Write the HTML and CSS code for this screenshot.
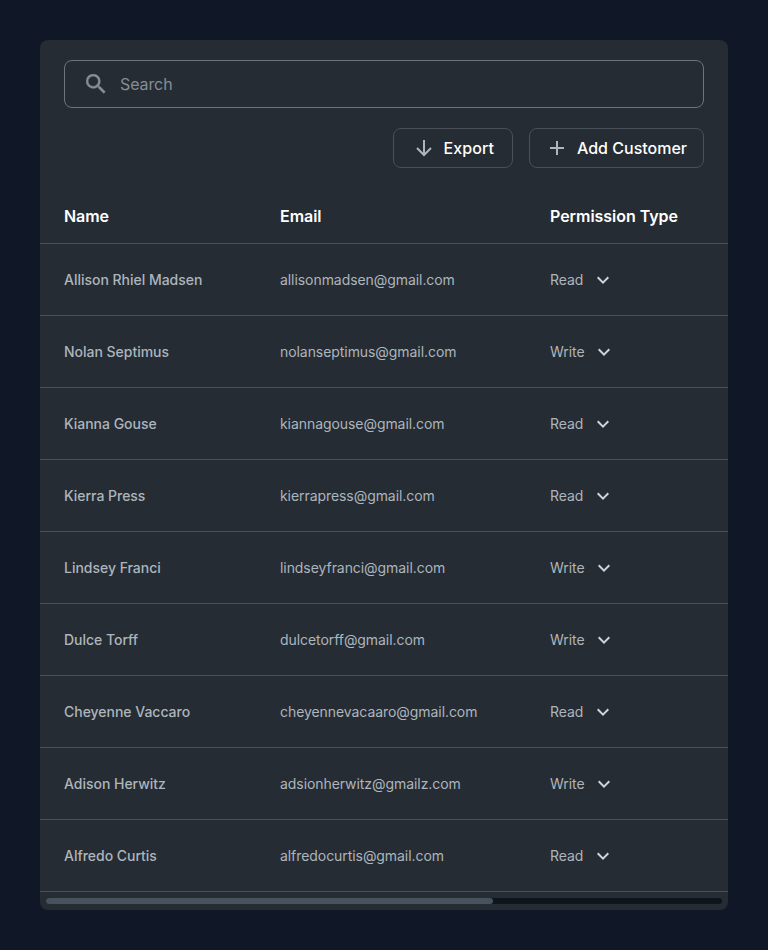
FILE: index.html
```html
<!DOCTYPE html>
<html lang="en">
<head>
<meta charset="utf-8">
<title>Customers</title>
<link rel="stylesheet" href="styles.css">
</head>
<body>
<main class="card">
  <div class="toolbar">
    <label class="search">
      <svg width="20" height="20" viewBox="3 3 18 18" fill="currentColor" stroke="currentColor" stroke-width=".3"><path d="M15.5 14h-.79l-.28-.27A6.47 6.47 0 0 0 16 9.5 6.5 6.5 0 1 0 9.5 16c1.61 0 3.09-.59 4.23-1.57l.27.28v.79l5 4.99L20.49 19l-4.99-5zm-6 0C7.01 14 5 11.99 5 9.5S7.01 5 9.5 5 14 7.01 14 9.5 11.99 14 9.5 14z"/></svg>
      <input type="text" placeholder="Search">
    </label>
    <div class="actions">
      <button class="btn export"><svg width="24" height="24" viewBox="0 0 24 24" fill="none" stroke="currentColor" stroke-width="2"><path d="M12 4v15M5 12l7 7 7-7"/></svg>Export</button>
      <button class="btn add"><svg width="24" height="24" viewBox="0 0 24 24" fill="none" stroke="currentColor" stroke-width="2"><path d="M12 5v14M5 12h14"/></svg>Add Customer</button>
    </div>
  </div>
  <div class="row head"><span>Name</span><span>Email</span><span>Permission Type</span></div>
  <div id="rows"></div>
  <div class="track"><div class="thumb"></div></div>
</main>
<script src="script.js"></script>
</body>
</html>
```
FILE: styles.css
```css
* { box-sizing: border-box; }
body { margin: 0; padding: 40px; height: 950px; background: #101726; font-family: Inter, sans-serif; }
.card { height: 870px; background: #252c33; border-radius: 8px; overflow: hidden; }
.toolbar { padding: 20px 24px 0; height: 149px; }
.search { display: flex; align-items: center; gap: 14px; height: 48px; padding: 0 21px; border: 1px solid #6c757d; border-radius: 8px; color: #868e96; }
.search input { flex: 1; padding: 0; border: 0; outline: 0; background: none; font: 400 16px/24px Inter, sans-serif; letter-spacing: -0.1px; color: #868e96; }
.search input::placeholder { color: #868e96; opacity: 1; }
.actions { display: flex; justify-content: flex-end; gap: 16px; margin-top: 20px; }
.btn { display: flex; align-items: center; gap: 8px; height: 40px; padding: 0; border: 1px solid #495057; border-radius: 8px; background: none; color: #fff; font: 500 16px/24px Inter, sans-serif; white-space: nowrap; }
.export { width: 120px; padding-left: 17.5px; letter-spacing: 0.1px; }
.add { width: 175px; padding-left: 15px; }
.btn svg { flex: none; color: #adb5bd; }
.row { display: grid; grid-template-columns: 216px 270px 1fr; align-items: center; height: 72px; padding: 0 24px; border-bottom: 1px solid #495057; font-size: 14px; line-height: 20px; letter-spacing: -0.065px; color: #adb5bd; }
.head { height: 55px; font-size: 16px; font-weight: 600; letter-spacing: -0.04px; color: #fff; }
.name { font-weight: 500; letter-spacing: -0.02px; }
.permission { display: flex; align-items: center; gap: 8px; }
.permission svg { color: #ced4da; }
.track { height: 6px; margin: 6px 6px 0; border-radius: 3px; background: #0d151d; }
.thumb { width: 447px; height: 6px; border-radius: 3px; background: #46535c; }
```
FILE: script.js
```js
const customers = [
  ["Allison Rhiel Madsen", "allisonmadsen@gmail.com", "Read"],
  ["Nolan Septimus", "nolanseptimus@gmail.com", "Write"],
  ["Kianna Gouse", "kiannagouse@gmail.com", "Read"],
  ["Kierra Press", "kierrapress@gmail.com", "Read"],
  ["Lindsey Franci", "lindseyfranci@gmail.com", "Write"],
  ["Dulce Torff", "dulcetorff@gmail.com", "Write"],
  ["Cheyenne Vaccaro", "cheyennevacaaro@gmail.com", "Read"],
  ["Adison Herwitz", "adsionherwitz@gmailz.com", "Write"],
  ["Alfredo Curtis", "alfredocurtis@gmail.com", "Read"]
];
document.getElementById("rows").innerHTML = customers.map(([name, email, permission]) =>
  `<div class="row"><span class="name">${name}</span><span>${email}</span><span class="permission">${permission}<svg width="24" height="24" viewBox="0 0 24 24" fill="none" stroke="currentColor" stroke-width="2"><path d="M6.7 9.3l5.3 5.3 5.3-5.3"/></svg></span></div>`
).join("");
```
